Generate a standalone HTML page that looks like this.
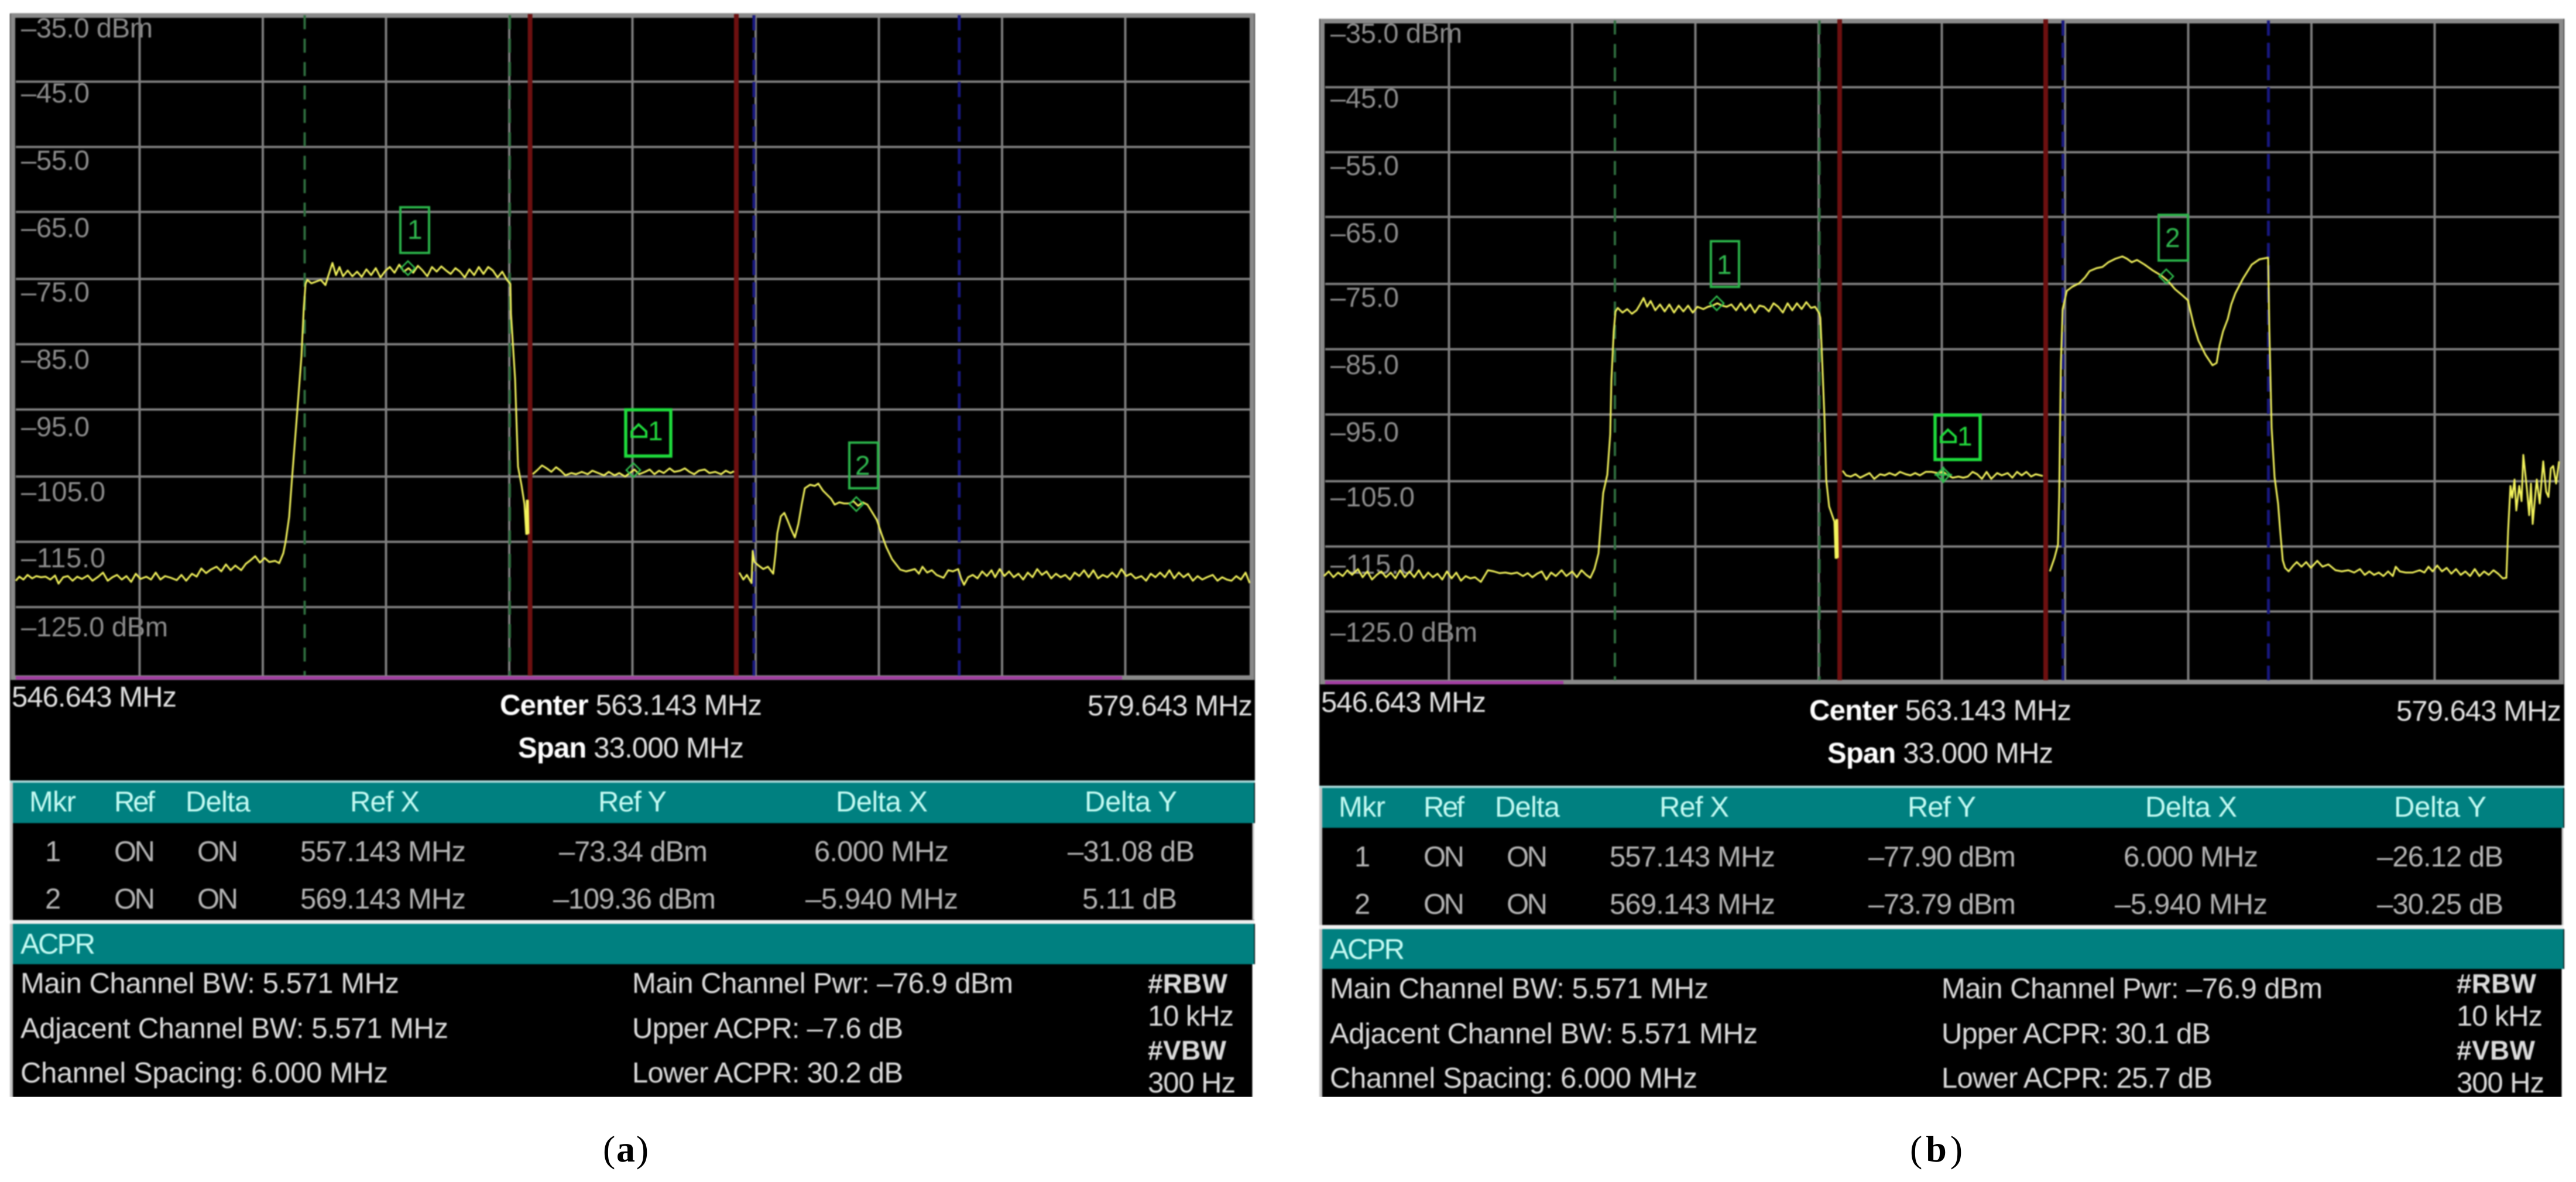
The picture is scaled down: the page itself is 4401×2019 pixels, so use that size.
<!DOCTYPE html>
<html lang="en">
<head>
<meta charset="utf-8">
<title>Spectrum analyzer ACPR screens</title>
<style>
html,body{margin:0;padding:0;background:#fff;width:4401px;height:2019px;overflow:hidden}
svg{display:block}
text{font-family:"Liberation Sans",sans-serif;font-size:49px;white-space:pre}
.soft{filter:blur(1.1px)}
.l{fill:#8c8c8c;font-size:47px}
.t{fill:#e2e2e2}
.b{fill:#fff;font-weight:bold}
.h{fill:#c4fbf3;font-size:49px}
.r{fill:#b4b4b4;font-size:49px}
.m{fill:#dcdcdc;font-size:49px}
.k{fill:#2fb84e;font-size:46px}
.grid{stroke:#7e7e7e;stroke-width:4;fill:none}
.frame{fill:none;stroke:#8a8a8a}
.red{stroke:#6d1010;stroke-width:8}
.gr{stroke:#2f6f3f;stroke-width:4;stroke-dasharray:24 16}
.bl{stroke:#17177f;stroke-width:5;stroke-dasharray:26 12}
.tr{fill:none;stroke:#f4f45c;stroke-width:3;stroke-linejoin:round}
.box{fill:none;stroke:#2bb44a;stroke-width:4}
.box2{fill:none;stroke:#1fdc3c;stroke-width:5.5}
.dia{fill:none;stroke:#2fc04e;stroke-width:2.6}
.cap{font-family:"Liberation Serif",serif;font-size:64px;fill:#000}
</style>
</head>
<body>
<svg width="4401" height="2019" viewBox="0 0 4401 2019" xmlns="http://www.w3.org/2000/svg">
<defs>
<clipPath id="ca"><rect x="0" y="0" width="2200" height="1874"/></clipPath>
<clipPath id="cb"><rect x="2200" y="0" width="2201" height="1874"/></clipPath>
</defs>
<rect width="4401" height="2019" fill="#fff"/>

<!-- PANEL A -->
<g clip-path="url(#ca)"><g class="soft">
<rect x="17" y="23" width="2127" height="1851" fill="#000"/>
<text class="l" x="36" y="64" textLength="225">–35.0 dBm</text>
<text class="l" x="36" y="175" textLength="117">–45.0</text>
<text class="l" x="36" y="290" textLength="117">–55.0</text>
<text class="l" x="36" y="405" textLength="117">–65.0</text>
<text class="l" x="36" y="515" textLength="117">–75.0</text>
<text class="l" x="36" y="630" textLength="117">–85.0</text>
<text class="l" x="36" y="745" textLength="117">–95.0</text>
<text class="l" x="36" y="856" textLength="144">–105.0</text>
<text class="l" x="36" y="969" textLength="144">–115.0</text>
<text class="l" x="36" y="1087" textLength="251">–125.0 dBm</text>
<path class="grid" d="M27 139.5H2135M27 251H2135M27 362H2135M27 476.5H2135M27 588H2135M27 699.5H2135M27 814H2135M27 925.5H2135M27 1037H2135M238.5 30V1154M449 30V1154M659.5 30V1154M870 30V1154M1080.5 30V1154M1291 30V1154M1501.5 30V1154M1712 30V1154M1922.5 30V1154"/>
<rect x="22" y="26.5" width="2117" height="1131" class="frame" stroke-width="8"/>
<rect x="27" y="1155" width="1890" height="6" fill="#a23fa2"/>
<line class="red" x1="905.6" y1="24" x2="905.6" y2="1154"/>
<line class="red" x1="1258" y1="24" x2="1258" y2="1154"/>
<line class="gr" x1="520.5" y1="26" x2="520.5" y2="1154"/>
<line class="gr" x1="871" y1="26" x2="871" y2="1154"/>
<line class="bl" x1="1288" y1="26" x2="1288" y2="1154"/>
<line class="bl" x1="1638.8" y1="26" x2="1638.8" y2="1154"/>
<polyline class="tr" points="27,992 33,985 40,990 47,982 55,988 62,984 70,986 78,985 86,990 94,983 100,997 108,986 116,984 124,992 132,985 140,989 150,983 158,992 168,985 176,978 184,992 192,986 200,982 208,990 216,984 224,994 232,980 240,989 250,985 258,990 266,978 274,990 282,984 292,987 302,991 310,982 318,992 328,980 336,985 344,971 352,979 360,973 370,968 378,976 386,964 394,974 402,966 412,974 420,963 428,957 436,950 444,961 452,953 460,960 470,958 477,962 484,945 488,925 494,883 499,816 508,701 515,609 519,526 522,485 525,478 532,484 540,481 548,478 556,487 560,474 568,449 574,470 580,456 586,472 594,462 602,472 610,464 618,473 626,460 634,470 642,458 650,474 658,463 666,456 674,466 682,452 690,464 698,458 706,466 714,454 722,462 730,472 738,456 746,464 754,455 762,462 770,468 778,458 786,464 794,474 802,460 810,470 818,456 826,468 834,456 842,462 850,474 858,464 866,478 872,485 873,536 880,647 885,797 891,829 896,861 899,912 900,855 901,912 902,855 903,912"/>
<polyline class="tr" points="910,810 918,803 926,795 934,800 942,806 950,798 958,804 966,812 976,808 984,810 994,806 1004,810 1012,804 1022,808 1032,812 1040,806 1050,812 1058,808 1068,814 1076,808 1084,802 1092,810 1102,806 1110,802 1118,810 1126,804 1134,808 1144,800 1152,806 1162,804 1170,800 1178,806 1186,810 1194,804 1204,802 1212,808 1222,806 1232,810 1240,804 1248,808 1254,805"/>
<polyline class="tr" points="1263,978 1270,990 1276,982 1284,996 1285,968 1286,941 1289,960 1296,966 1304,972 1312,968 1321,980 1325,945 1328,911 1334,882 1340,876 1346,890 1352,905 1358,918 1364,895 1370,860 1375,834 1384,828 1392,830 1398,826 1406,838 1414,846 1420,852 1426,862 1434,858 1442,860 1451,860 1458,856 1466,864 1474,858 1482,862 1490,875 1498,888 1506,912 1514,934 1524,955 1538,973 1548,976 1556,974 1563,972 1570,980 1576,968 1584,978 1592,974 1600,982 1612,987 1620,974 1628,976 1637,972 1642,988 1647,999 1654,986 1662,982 1670,988 1678,976 1686,984 1694,974 1700,986 1708,972 1716,984 1724,976 1732,986 1740,980 1748,990 1756,978 1764,986 1772,972 1780,982 1788,976 1796,988 1804,980 1812,986 1820,982 1828,990 1836,978 1844,984 1852,974 1860,986 1868,974 1876,988 1884,982 1892,986 1900,978 1908,986 1916,972 1924,984 1932,980 1940,988 1950,984 1958,992 1966,980 1974,986 1982,978 1990,986 1998,974 2006,988 2014,978 2022,986 2030,980 2038,992 2046,984 2054,990 2062,986 2072,982 2080,992 2088,986 2096,990 2104,992 2112,984 2120,990 2128,978 2135,996"/>
<rect class="box" x="684" y="354" width="49" height="78"/>
<text class="k" x="696" y="408">1</text>
<path class="dia" d="M697 446l12 12-12 12-12-12z"/>
<rect class="box2" x="1069" y="700" width="77" height="79"/>
<path class="box2" style="stroke-width:4" d="M1079 746v-9l12-12 13 12v9z"/>
<text class="k" style="fill:#22d83c" x="1107" y="752" textLength="26">1</text>
<path class="dia" d="M1082 791l12 12-12 12-12-12z"/>
<rect class="box" x="1451" y="756" width="49" height="78"/>
<text class="k" x="1461" y="811">2</text>
<path class="dia" d="M1463 849l12 12-12 12-12-12z"/>

<text class="t" x="20" y="1207" textLength="282">546.643 MHz</text>
<text x="854" y="1221" textLength="448"><tspan class="b">Center</tspan><tspan class="t"> 563.143 MHz</tspan></text>
<text x="885" y="1294" textLength="386"><tspan class="b">Span</tspan><tspan class="t"> 33.000 MHz</tspan></text>
<text class="t" x="1858" y="1222" textLength="282">579.643 MHz</text>

<rect x="17" y="1333" width="2127" height="4" fill="#a8d8d8"/>
<rect x="17" y="1337" width="5" height="537" fill="#c2c2c2"/>
<rect x="2139.5" y="1406" width="3.5" height="165" fill="#c2c2c2"/>
<rect x="22" y="1337" width="2120.5" height="69" fill="#008080"/>
<rect x="17" y="1571.5" width="2126" height="6.5" fill="#f0f0f0"/>
<rect x="22" y="1578" width="2120.5" height="69" fill="#008080"/>
<rect x="2139.5" y="1647" width="5" height="227" fill="#fff"/>
<rect x="2142.5" y="1406" width="2" height="165" fill="#fff"/>
<rect x="2143" y="1571" width="2" height="7" fill="#fff"/>

<text class="h" x="50" y="1386" textLength="80">Mkr</text>
<text class="h" x="195" y="1386" textLength="70">Ref</text>
<text class="h" x="317" y="1386" textLength="111">Delta</text>
<text class="h" x="598" y="1386" textLength="119">Ref X</text>
<text class="h" x="1022" y="1386" textLength="117">Ref Y</text>
<text class="h" x="1428" y="1386" textLength="157">Delta X</text>
<text class="h" x="1853" y="1386" textLength="158">Delta Y</text>

<text class="r" x="77" y="1471">1</text>
<text class="r" x="195" y="1471" textLength="70">ON</text>
<text class="r" x="337" y="1471" textLength="70">ON</text>
<text class="r" x="513" y="1471" textLength="283">557.143 MHz</text>
<text class="r" x="955" y="1471" textLength="254">–73.34 dBm</text>
<text class="r" x="1391" y="1471" textLength="230">6.000 MHz</text>
<text class="r" x="1824" y="1471" textLength="217">–31.08 dB</text>

<text class="r" x="77" y="1552">2</text>
<text class="r" x="195" y="1552" textLength="70">ON</text>
<text class="r" x="337" y="1552" textLength="70">ON</text>
<text class="r" x="513" y="1552" textLength="283">569.143 MHz</text>
<text class="r" x="945" y="1552" textLength="278">–109.36 dBm</text>
<text class="r" x="1376" y="1552" textLength="261">–5.940 MHz</text>
<text class="r" x="1849" y="1552" textLength="162">5.11 dB</text>

<text class="h" x="35" y="1629" textLength="128">ACPR</text>
<text class="m" x="35" y="1696" textLength="647">Main Channel BW: 5.571 MHz</text>
<text class="m" x="35" y="1773" textLength="731">Adjacent Channel BW: 5.571 MHz</text>
<text class="m" x="35" y="1849" textLength="628">Channel Spacing: 6.000 MHz</text>
<text class="m" x="1080" y="1696" textLength="651">Main Channel Pwr: –76.9 dBm</text>
<text class="m" x="1080" y="1773" textLength="463">Upper ACPR: –7.6 dB</text>
<text class="m" x="1080" y="1849" textLength="463">Lower ACPR: 30.2 dB</text>
<text class="m" style="font-weight:bold;font-size:46px" x="1961" y="1696" textLength="136">#RBW</text>
<text class="m" x="1961" y="1752" textLength="147">10 kHz</text>
<text class="m" style="font-weight:bold;font-size:46px" x="1961" y="1810" textLength="134">#VBW</text>
<text class="m" x="1961" y="1866" textLength="150">300 Hz</text>
</g></g>

<!-- PANEL B -->
<g clip-path="url(#cb)"><g class="soft">
<rect x="2254" y="32" width="2127" height="1842" fill="#000"/>
<text class="l" x="2273" y="73" textLength="225">–35.0 dBm</text>
<text class="l" x="2273" y="184" textLength="117">–45.0</text>
<text class="l" x="2273" y="299" textLength="117">–55.0</text>
<text class="l" x="2273" y="414" textLength="117">–65.0</text>
<text class="l" x="2273" y="524" textLength="117">–75.0</text>
<text class="l" x="2273" y="639" textLength="117">–85.0</text>
<text class="l" x="2273" y="754" textLength="117">–95.0</text>
<text class="l" x="2273" y="865" textLength="144">–105.0</text>
<text class="l" x="2273" y="980" textLength="144">–115.0</text>
<text class="l" x="2273" y="1096" textLength="251">–125.0 dBm</text>
<path class="grid" d="M2264 149H4373M2264 260H4373M2264 370.5H4373M2264 485H4373M2264 596.5H4373M2264 708H4373M2264 822H4373M2264 933.5H4373M2264 1044.5H4373M2475.5 40V1163M2686 40V1163M2896.5 40V1163M3107 40V1163M3317.5 40V1163M3528 40V1163M3738.5 40V1163M3949 40V1163M4159.5 40V1163"/>
<rect x="2259" y="36" width="2117" height="1129" class="frame" stroke-width="8"/>
<rect x="2264" y="1163" width="407" height="6" fill="#a23fa2"/>
<line class="red" x1="3143" y1="33" x2="3143" y2="1162"/>
<line class="red" x1="3495" y1="33" x2="3495" y2="1162"/>
<line class="gr" x1="2759" y1="35" x2="2759" y2="1162"/>
<line class="gr" x1="3108.5" y1="35" x2="3108.5" y2="1162"/>
<line class="bl" x1="3524.5" y1="35" x2="3524.5" y2="1162"/>
<line class="bl" x1="3875.5" y1="35" x2="3875.5" y2="1162"/>
<polyline class="tr" points="2262,984 2270,976 2278,986 2286,978 2294,984 2302,974 2310,982 2320,972 2328,986 2336,976 2344,990 2352,982 2360,976 2368,986 2376,978 2384,988 2392,974 2400,986 2408,976 2416,986 2424,974 2432,988 2440,978 2448,986 2456,980 2464,990 2472,976 2480,988 2488,978 2496,992 2504,984 2512,988 2520,986 2530,994 2536,984 2542,974 2552,976 2562,979 2572,978 2582,980 2592,978 2602,984 2610,979 2618,986 2626,980 2634,976 2642,990 2650,978 2658,984 2668,974 2676,984 2686,976 2694,986 2702,974 2710,982 2717,987 2724,972 2731,945 2739,842 2746,811 2751,742 2753,650 2757,566 2760,532 2764,526 2772,534 2780,528 2788,536 2796,530 2802,520 2808,509 2814,524 2820,514 2828,530 2836,520 2844,532 2852,520 2860,534 2868,522 2876,532 2884,522 2892,534 2900,524 2910,528 2918,524 2926,522 2934,518 2942,522 2950,524 2958,520 2966,530 2974,518 2982,530 2990,520 2998,534 3006,522 3014,524 3022,532 3030,518 3038,524 3046,534 3054,518 3062,530 3070,518 3078,528 3086,516 3094,526 3101,524 3108,535 3110,543 3112,589 3117,712 3120,819 3125,865 3134,891 3136,953 3137,888 3138,953 3139,888 3140,953"/>
<polyline class="tr" points="3148,804 3154,812 3162,814 3170,810 3178,816 3186,812 3194,808 3202,818 3212,810 3220,812 3228,808 3238,812 3246,806 3256,810 3264,812 3272,808 3280,812 3290,806 3300,806 3310,808 3320,806 3328,812 3336,816 3346,814 3354,816 3362,814 3370,806 3378,810 3386,818 3394,806 3402,818 3412,808 3420,812 3430,808 3438,816 3446,806 3454,812 3462,806 3470,814 3478,810 3490,813"/>
<polyline class="tr" points="3502,976 3510,953 3516,930 3518,850 3521,620 3524,528 3531,497 3540,490 3552,484 3562,474 3570,463 3582,458 3592,456 3602,448 3614,442 3626,438 3634,442 3642,448 3651,444 3664,452 3678,462 3693,471 3704,480 3716,494 3728,504 3738,513 3748,556 3756,582 3768,606 3780,624 3787,620 3792,590 3798,566 3806,545 3812,520 3819,501 3832,476 3847,452 3860,443 3875,440 3877,559 3881,731 3886,815 3892,860 3896,911 3900,957 3904,970 3910,976 3918,966 3924,960 3932,968 3940,960 3948,970 3959,958 3968,968 3978,964 3990,974 4001,976 4012,974 4022,978 4032,972 4040,982 4048,976 4056,982 4064,978 4072,984 4080,976 4088,984 4093,968 4100,976 4110,978 4122,978 4134,974 4142,978 4149,968 4156,976 4164,966 4172,976 4180,970 4188,980 4196,972 4204,982 4212,976 4220,984 4228,972 4236,984 4244,976 4252,982 4260,974 4268,980 4276,988 4282,987 4285,907 4289,830 4292,850 4296,819 4299,872 4304,830 4308,856 4311,777 4317,834 4321,880 4324,826 4327,895 4331,850 4334,819 4339,860 4345,788 4350,840 4354,849 4358,800 4362,796 4367,826 4372,788"/>
<rect class="box" x="2923" y="412" width="48" height="78"/>
<text class="k" x="2933" y="468">1</text>
<path class="dia" d="M2933 506l12 12-12 12-12-12z"/>
<rect class="box2" x="3306" y="709" width="77" height="76"/>
<path class="box2" style="stroke-width:4" d="M3316 755v-9l12-12 13 12v9z"/>
<text class="k" style="fill:#22d83c" x="3344" y="761" textLength="26">1</text>
<path class="dia" d="M3320 799l12 12-12 12-12-12z"/>
<path d="M3305 811h30M3320 797v28" stroke="#2fc04e" stroke-width="3" fill="none"/>
<rect class="box" x="3688" y="367" width="50" height="78"/>
<text class="k" x="3699" y="422">2</text>
<path class="dia" d="M3701 460l12 12-12 12-12-12z"/>

<text class="t" x="2257" y="1216" textLength="282">546.643 MHz</text>
<text x="3091" y="1230" textLength="448"><tspan class="b">Center</tspan><tspan class="t"> 563.143 MHz</tspan></text>
<text x="3122" y="1303" textLength="386"><tspan class="b">Span</tspan><tspan class="t"> 33.000 MHz</tspan></text>
<text class="t" x="4094" y="1231" textLength="282">579.643 MHz</text>

<rect x="2254" y="1342" width="2127" height="4" fill="#a8d8d8"/>
<rect x="2254" y="1346" width="5" height="528" fill="#c2c2c2"/>
<rect x="4376.5" y="1414" width="3.5" height="166" fill="#c2c2c2"/>
<rect x="2259" y="1346" width="2120.5" height="68" fill="#008080"/>
<rect x="2254" y="1580" width="2126" height="7" fill="#f0f0f0"/>
<rect x="2259" y="1587" width="2120.5" height="68" fill="#008080"/>
<rect x="4376.5" y="1655" width="5" height="219" fill="#fff"/>
<rect x="4379.5" y="1414" width="2" height="173" fill="#fff"/>

<text class="h" x="2287" y="1395" textLength="80">Mkr</text>
<text class="h" x="2432" y="1395" textLength="70">Ref</text>
<text class="h" x="2554" y="1395" textLength="111">Delta</text>
<text class="h" x="2835" y="1395" textLength="119">Ref X</text>
<text class="h" x="3259" y="1395" textLength="117">Ref Y</text>
<text class="h" x="3665" y="1395" textLength="157">Delta X</text>
<text class="h" x="4090" y="1395" textLength="158">Delta Y</text>

<text class="r" x="2314" y="1480">1</text>
<text class="r" x="2432" y="1480" textLength="70">ON</text>
<text class="r" x="2574" y="1480" textLength="70">ON</text>
<text class="r" x="2750" y="1480" textLength="283">557.143 MHz</text>
<text class="r" x="3192" y="1480" textLength="252">–77.90 dBm</text>
<text class="r" x="3628" y="1480" textLength="230">6.000 MHz</text>
<text class="r" x="4061" y="1480" textLength="216">–26.12 dB</text>

<text class="r" x="2314" y="1561">2</text>
<text class="r" x="2432" y="1561" textLength="70">ON</text>
<text class="r" x="2574" y="1561" textLength="70">ON</text>
<text class="r" x="2750" y="1561" textLength="283">569.143 MHz</text>
<text class="r" x="3192" y="1561" textLength="252">–73.79 dBm</text>
<text class="r" x="3613" y="1561" textLength="261">–5.940 MHz</text>
<text class="r" x="4061" y="1561" textLength="216">–30.25 dB</text>

<text class="h" x="2272" y="1638" textLength="128">ACPR</text>
<text class="m" x="2272" y="1705" textLength="647">Main Channel BW: 5.571 MHz</text>
<text class="m" x="2272" y="1782" textLength="731">Adjacent Channel BW: 5.571 MHz</text>
<text class="m" x="2272" y="1858" textLength="628">Channel Spacing: 6.000 MHz</text>
<text class="m" x="3317" y="1705" textLength="651">Main Channel Pwr: –76.9 dBm</text>
<text class="m" x="3317" y="1782" textLength="460">Upper ACPR: 30.1 dB</text>
<text class="m" x="3317" y="1858" textLength="463">Lower ACPR: 25.7 dB</text>
<text class="m" style="font-weight:bold;font-size:46px" x="4197" y="1696" textLength="136">#RBW</text>
<text class="m" x="4197" y="1752" textLength="147">10 kHz</text>
<text class="m" style="font-weight:bold;font-size:46px" x="4197" y="1810" textLength="134">#VBW</text>
<text class="m" x="4197" y="1866" textLength="150">300 Hz</text>
</g></g>

<text class="cap" x="1030" y="1984" textLength="78">(<tspan font-weight="bold">a</tspan>)</text>
<text class="cap" x="3263" y="1984" textLength="90">(<tspan font-weight="bold">b</tspan>)</text>
</svg>
</body>
</html>
